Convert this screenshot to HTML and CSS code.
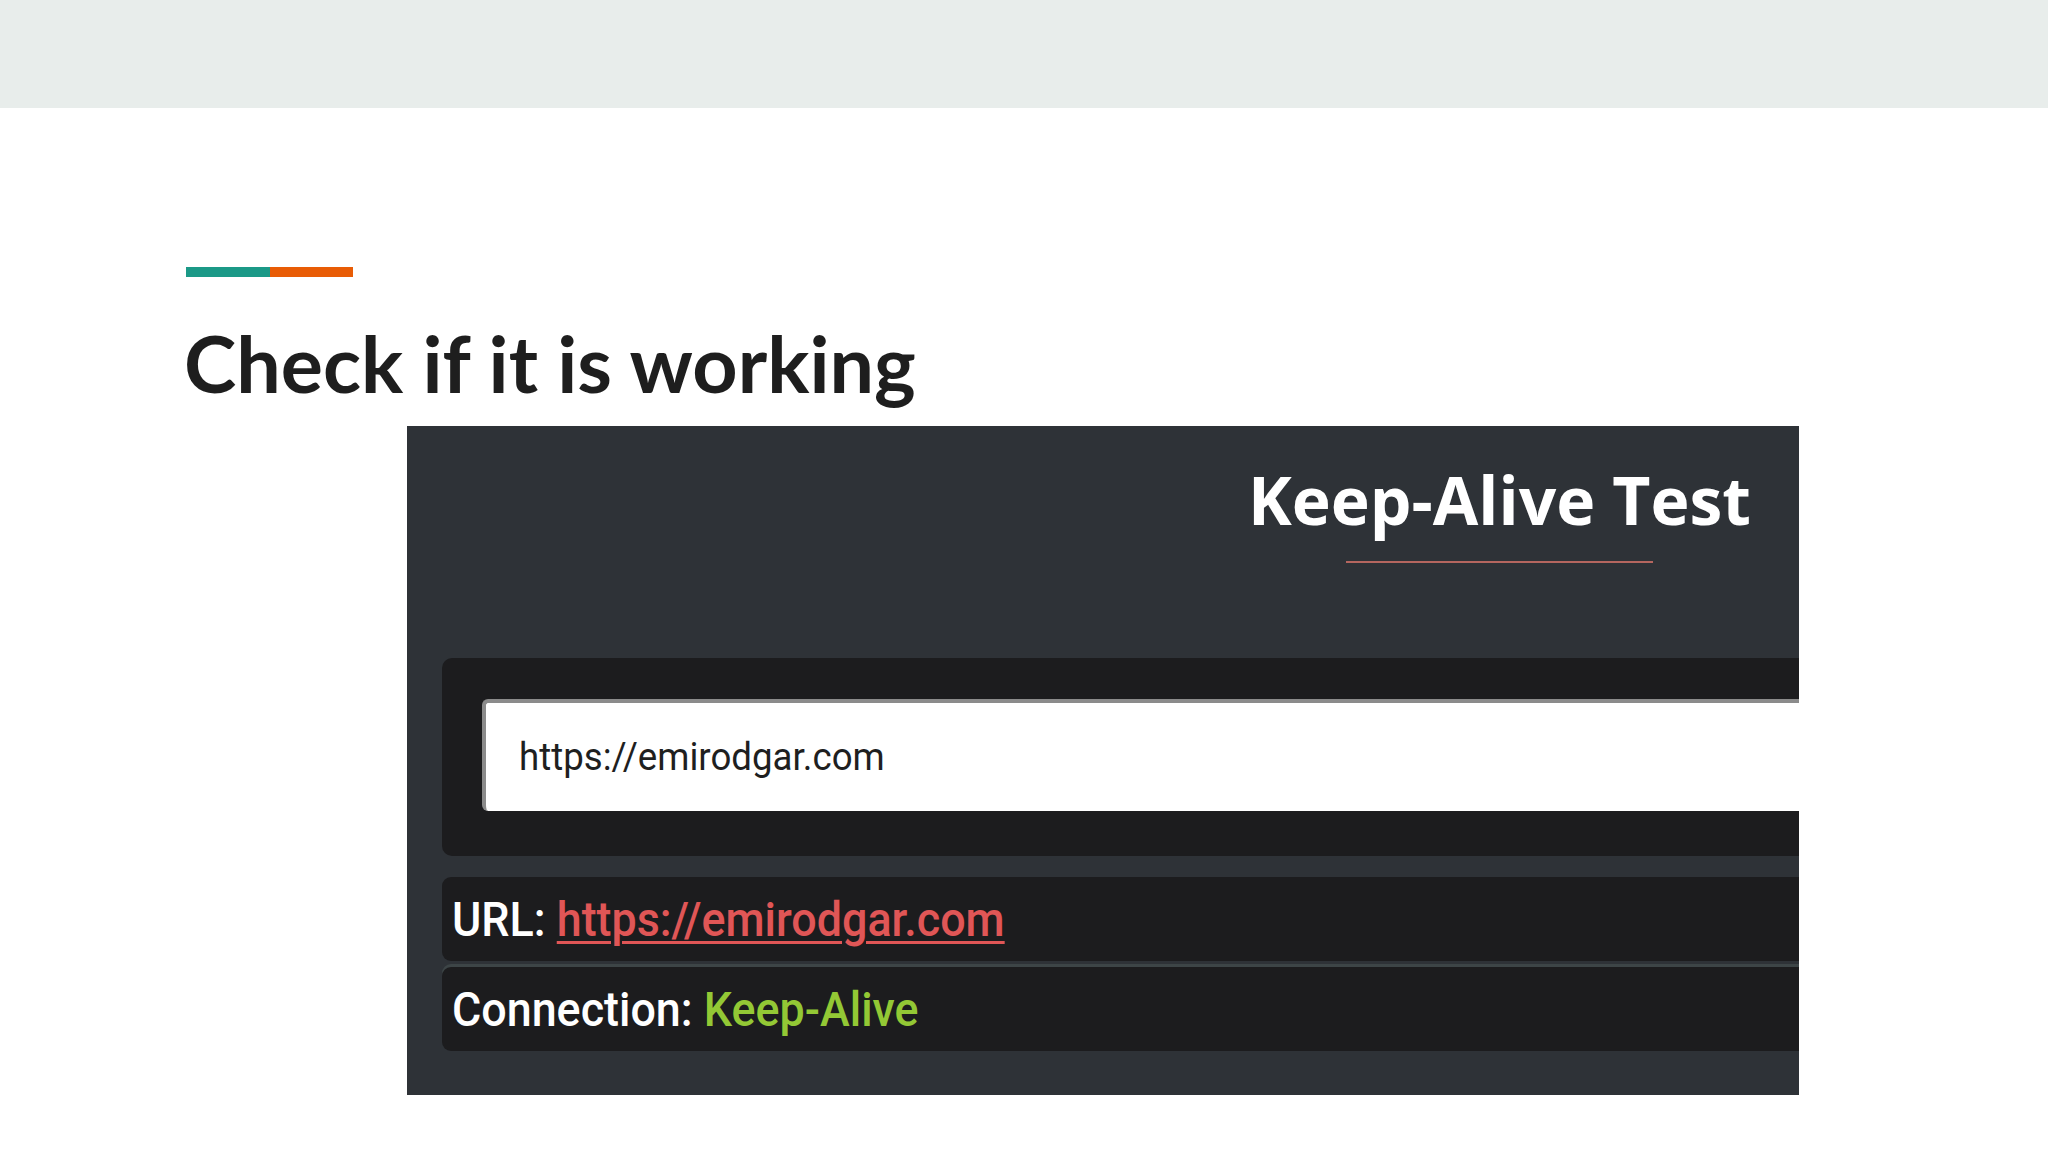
FILE: index.html
```html
<!DOCTYPE html>
<html lang="en">
<head>
<meta charset="utf-8">
<title>Check if it is working</title>
<link rel="stylesheet" href="styles.css">
</head>
<body>
<header class="topband"></header>
<main class="slide">
  <div class="accent"><span class="accent-teal"></span><span class="accent-orange"></span></div>
  <h1 class="heading">Check if it is working</h1>
  <section class="shot">
    <div class="shot-title">
      <div class="title-block">
        <h2 class="title">Keep-Alive Test</h2>
        <div class="title-rule"></div>
      </div>
    </div>
    <div class="form-box">
      <div class="url-input"><span class="input-text">https://emirodgar.com</span></div>
    </div>
    <div class="result-row">
      <span class="row-text"><span class="label">URL: </span><a class="link" href="#">https://emirodgar.com</a></span>
    </div>
    <div class="result-row result-row-sep">
      <span class="row-text"><span class="label">Connection: </span><span class="ok">Keep-Alive</span></span>
    </div>
  </section>
</main>
</body>
</html>
```
FILE: styles.css
```css
html, body {
  margin: 0;
  padding: 0;
  background: #ffffff;
}
body {
  width: 2048px;
  height: 1152px;
  overflow: hidden;
  font-family: "Lato", "Liberation Sans", sans-serif;
}
.topband {
  height: 108px;
  background: #e8edeb;
}
.slide {
  padding-left: 186px;
}
.accent {
  display: flex;
  margin-top: 159px;
  height: 10px;
  width: 167px;
}
.accent-teal {
  width: 84px;
  background: #1b9987;
}
.accent-orange {
  flex: 1;
  background: #e85c05;
}
.heading {
  margin: 0;
  margin-top: 38px;
  margin-left: -2px;
  font-family: "Lato", "Liberation Sans", sans-serif;
  font-weight: 700;
  font-size: 79px;
  line-height: 96px;
  color: #1e1e1e;
}
.shot {
  margin-left: 221px;
  margin-top: 15px;
  width: 1392px;
  height: 669px;
  background: #2e3237;
  overflow: hidden;
  box-sizing: border-box;
  padding-left: 35px;
}
.shot-title {
  display: flex;
  justify-content: flex-end;
  padding-right: 48px;
  height: 232px;
  box-sizing: border-box;
  padding-top: 33px;
}
.title-block {
  display: flex;
  flex-direction: column;
  align-items: center;
}
.title {
  margin: 0;
  font-family: "Open Sans", "Liberation Sans", sans-serif;
  font-weight: 700;
  font-size: 66px;
  line-height: 80px;
  color: #ffffff;
}
.title-rule {
  width: 307px;
  height: 2px;
  background: #b5665f;
  margin-top: 22px;
}
.form-box {
  width: 1500px;
  height: 198px;
  box-sizing: border-box;
  background: #1c1c1e;
  border-radius: 10px;
  padding: 41px 0 0 40px;
}
.url-input {
  height: 112px;
  box-sizing: border-box;
  background: #ffffff;
  border-top: 4px solid #8b8b8b;
  border-left: 4px solid #8b8b8b;
  border-radius: 6px;
  padding-left: 33px;
  display: flex;
  align-items: center;
  font-family: "Roboto", "Liberation Sans", sans-serif;
  font-size: 38px;
  color: #1f1f1f;
}
.input-text {
  display: inline-block;
  transform: scaleX(0.965);
  transform-origin: left center;
}
.result-row {
  width: 1500px;
  height: 84px;
  box-sizing: border-box;
  background: #1c1c1e;
  border-radius: 9px;
  margin-top: 21px;
  padding-left: 10px;
  display: flex;
  align-items: center;
  font-family: "Roboto", "Liberation Sans", sans-serif;
  font-weight: 500;
  font-size: 49px;
  color: #ffffff;
  white-space: pre;
}
.row-text {
  display: inline-block;
  transform: scaleX(0.915);
  transform-origin: left center;
}
.result-row-sep {
  margin-top: 6px;
  box-shadow: 0 -3px 0 #3d4547;
}
.link {
  color: #e05656;
  text-decoration: underline;
  text-decoration-thickness: 3px;
  text-underline-offset: 5px;
}
.ok {
  color: #93c835;
}
```
